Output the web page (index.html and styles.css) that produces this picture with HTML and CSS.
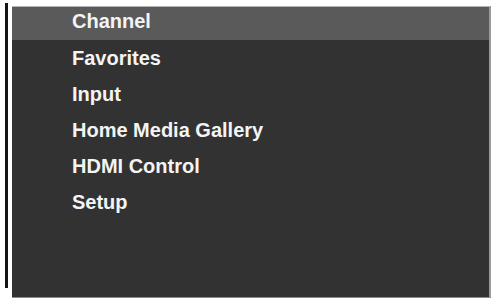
FILE: index.html
```html
<!DOCTYPE html>
<html>
<head>
<meta charset="utf-8">
<link rel="stylesheet" href="styles.css">
</head>
<body>
<div class="frame">
  <div class="rule"></div>
  <div class="panel">
    <ul class="menu">
      <li class="item active">Channel</li>
      <li class="item">Favorites</li>
      <li class="item">Input</li>
      <li class="item">Home Media Gallery</li>
      <li class="item">HDMI Control</li>
      <li class="item">Setup</li>
    </ul>
  </div>
</div>
</body>
</html>
```
FILE: styles.css
```css
html, body {
  margin: 0;
  padding: 0;
  background: #ffffff;
}
body {
  width: 493px;
  height: 301px;
  overflow: hidden;
  font-family: "Liberation Sans", Arial, sans-serif;
}
.frame {
  display: flex;
  align-items: flex-start;
  padding: 6px 0 0 5px;
  gap: 4px;
}
.rule {
  width: 3px;
  height: 285px;
  margin-top: -3px;
  background: #141414;
  flex: none;
}
.panel {
  width: 479px;
  height: 292px;
  background: #323232;
  border-top: 1px solid #b5b5b5;
  border-right: 2px solid #9a9a9a;
  border-bottom: 1px solid #8a8a8a;
  box-sizing: border-box;
}
.menu {
  list-style: none;
  margin: 0;
  padding: 0;
}
.item {
  height: 36px;
  line-height: 36px;
  padding-left: 60px;
  color: #f4f4f4;
  font-size: 20px;
  font-weight: bold;
}
.item.active {
  height: 33px;
  line-height: 29px;
  background: #5a5a5a;
}
```
